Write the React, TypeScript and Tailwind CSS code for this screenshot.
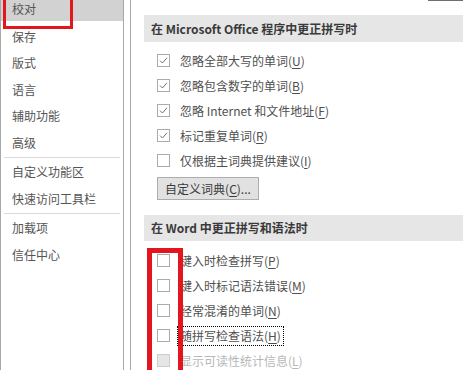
import React from 'react';

// ─── Data ─────────────────────────────────────────────────────────────────────

type NavEntry = { label: string; selected?: boolean } | 'sep';

const NAV: NavEntry[] = [
  { label: '校对', selected: true },
  { label: '保存' },
  { label: '版式' },
  { label: '语言' },
  { label: '辅助功能' },
  { label: '高级' },
  'sep',
  { label: '自定义功能区' },
  { label: '快速访问工具栏' },
  'sep',
  { label: '加载项' },
  { label: '信任中心' },
];

interface Opt {
  text: string;
  key: string;
  checked?: boolean;
  disabled?: boolean;
  focused?: boolean;
}

const OFFICE_OPTS: Opt[] = [
  { text: '忽略全部大写的单词', key: 'U', checked: true },
  { text: '忽略包含数字的单词', key: 'B', checked: true },
  { text: '忽略 Internet 和文件地址', key: 'F', checked: true },
  { text: '标记重复单词', key: 'R', checked: true },
  { text: '仅根据主词典提供建议', key: 'I' },
];

const WORD_OPTS: Opt[] = [
  { text: '键入时检查拼写', key: 'P' },
  { text: '键入时标记语法错误', key: 'M' },
  { text: '经常混淆的单词', key: 'N' },
  { text: '随拼写检查语法', key: 'H', focused: true },
  { text: '显示可读性统计信息', key: 'L', disabled: true },
];

// ─── Checkbox ────────────────────────────────────────────────────────────────

function Box({ checked, disabled }: { checked?: boolean; disabled?: boolean }) {
  return (
    <span
      className={`w-[13px] h-[13px] shrink-0 border flex items-center justify-center
        ${disabled ? 'bg-[#e6e6e6] border-[#cccccc]' : 'bg-white border-[#ababab]'}`}
    >
      {checked && (
        <svg width="11" height="11" viewBox="0 0 11 11" fill="none" aria-hidden="true">
          <path d="M2 5.6 L4.4 8 L9 2.8" stroke="#707070" strokeWidth="1" />
        </svg>
      )}
    </span>
  );
}

function OptionRow({ opt }: { opt: Opt }) {
  const color = opt.disabled ? 'text-[#b8b8b8]' : 'text-[#4f4f4f]';
  const label = (
    <>
      {opt.text}(<span className="underline underline-offset-2">{opt.key}</span>)
    </>
  );
  return (
    <div className="flex items-center h-[25px] pl-[13px]">
      <Box checked={opt.checked} disabled={opt.disabled} />
      {opt.focused ? (
        <span className={`ml-[7px] px-[2px] h-[20px] flex items-center border border-dotted border-black ${color}`}>
          {label}
        </span>
      ) : (
        <span className={`ml-[10px] ${color}`}>{label}</span>
      )}
    </div>
  );
}

function SectionHeader({ children, h }: { children: React.ReactNode; h: string }) {
  return (
    <div className={`${h} bg-[#e6e6e6] flex items-center pl-[7px] font-bold text-[#3a3a3a]`}>
      {children}
    </div>
  );
}

// ─── App ──────────────────────────────────────────────────────────────────────

export default function App() {
  return (
    <div
      className="relative w-[463px] h-[370px] overflow-hidden bg-white flex text-[12px] leading-none"
      style={{ fontFamily: '"Noto Sans CJK SC", "Noto Sans", sans-serif' }}
    >
      {/* Left category list */}
      <div className="w-[124px] h-full shrink-0 border-x border-[#a8a8a8] overflow-hidden">
        <div className="-mt-[3px]">
          {NAV.map((n, i) =>
            n === 'sep' ? (
              <div key={i} className="h-[3px] flex items-center px-[3px]">
                <div className="h-px w-full bg-[#dadada]" />
              </div>
            ) : (
              <div
                key={i}
                className={`flex items-center pl-[11px] text-[#555555]
                  ${n.selected ? 'h-[24px] mb-[2.5px] bg-[#d2d2d2]' : 'h-[26.5px]'}`}
              >
                {n.label}
              </div>
            )
          )}
        </div>
      </div>

      {/* Right options pane */}
      <div className="ml-[6px] flex-1 h-full border-l border-[#a8a8a8] pl-[13px]">
        <div className="relative h-[15px]">
          <div className="absolute right-0 top-0 w-[35px] h-px bg-[#6e6e6e]" />
        </div>

        <SectionHeader h="h-[27px]">在 Microsoft Office 程序中更正拼写时</SectionHeader>
        <div className="mt-[6px]">
          {OFFICE_OPTS.map(o => <OptionRow key={o.key} opt={o} />)}
        </div>
        <div className="mt-[4px] pl-[13px]">
          <button className="h-[23px] w-[102px] bg-[#e1e1e1] border border-[#adadad] text-[#3a3a3a] flex items-center justify-center">
            自定义词典(<span className="underline underline-offset-2">C</span>)...
          </button>
        </div>

        <div className="mt-[15px]">
          <SectionHeader h="h-[26px]">在 Word 中更正拼写和语法时</SectionHeader>
        </div>
        <div className="mt-[7px]">
          {WORD_OPTS.map(o => <OptionRow key={o.key} opt={o} />)}
        </div>
      </div>

      {/* Red annotation boxes */}
      <div className="absolute left-[3px] -top-[6px] w-[70px] h-[35px] border-[3px] border-[#e3161d]" />
      <div className="absolute left-[147px] top-[248px] w-[36px] h-[140px] border-[5px] border-[#e3161d]" />
    </div>
  );
}
